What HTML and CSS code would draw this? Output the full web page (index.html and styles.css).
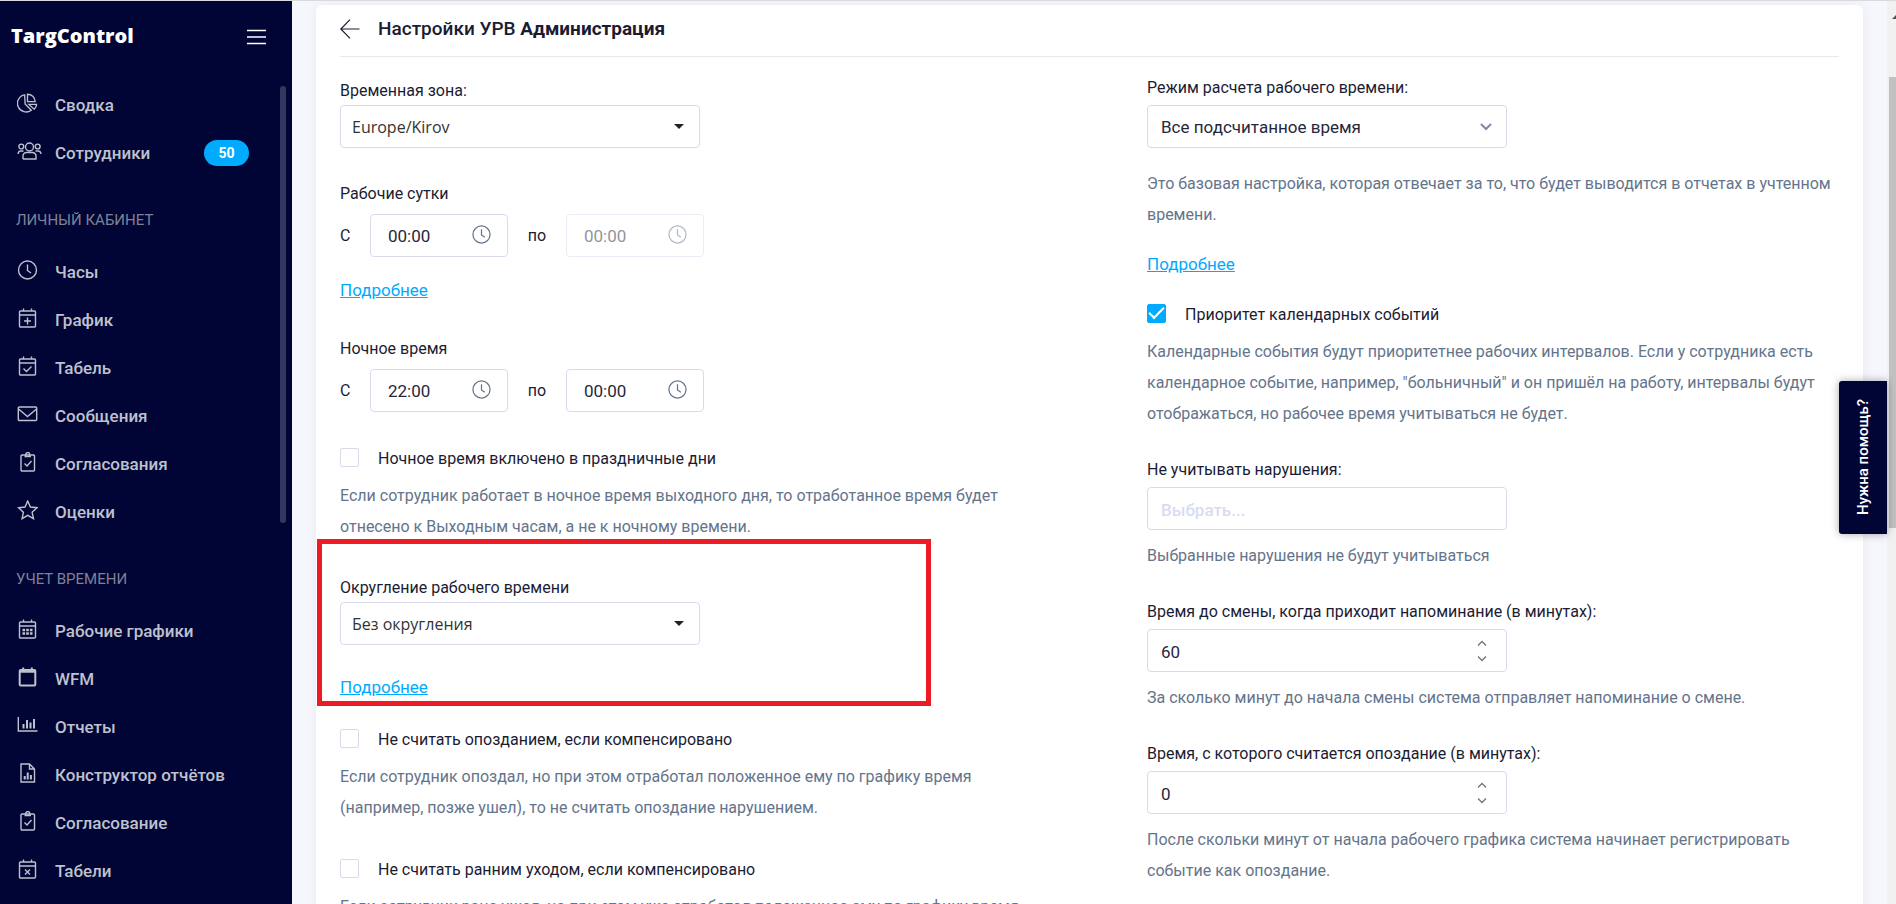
FILE: index.html
```
<!DOCTYPE html>
<html lang="ru">
<head>
    <meta charset="UTF-8">
    <meta name="viewport" content="width=device-width, initial-scale=1.0">
    <title>Настройки УРВ</title>
    <link rel="stylesheet" href="styles.css">
</head>
<body>
    <!-- shared icons -->
    <svg class="sprite" aria-hidden="true">
        <symbol id="i-clock" viewBox="0 0 20 20">
            <circle cx="10" cy="10" r="9"/>
            <path d="M10 4.5V10.5L13.5 13"/>
        </symbol>
        <symbol id="i-calendar" viewBox="0 0 20 20">
            <rect x="2" y="3" width="16" height="16" rx="1"/>
            <path d="M2 7H18M6 0.5V3M14 0.5V3"/>
        </symbol>
        <symbol id="i-clipboard" viewBox="0 0 20 20">
            <rect x="3.5" y="3" width="13.5" height="16" rx="1"/>
            <path d="M7 4.5H13.5M8.2 4V2.6A2 2 0 0 1 12.2 2.6V4M7 11.5L9.5 14L14 9"/>
        </symbol>
        <symbol id="i-spin" viewBox="0 0 10 20">
            <path d="M1 5L5 1L9 5M1 16L5 20L9 16"/>
        </symbol>
    </svg>

    <div class="app">
        <aside class="sidebar">
            <div class="brand">
                <a href="#" class="logo">TargControl</a>
                <button type="button" class="menu-btn" aria-label="Меню">
                    <svg width="20" height="16" viewBox="0 0 20 16"><path d="M0 1.5H19M0 8H19M0 14.5H19"/></svg>
                </button>
            </div>
            <nav class="menu">
                <a href="#" class="menu-item">
                    <svg class="icon" viewBox="0 0 22 20"><path d="M8 1.5A9 9 0 1 0 15 17.5L8.5 11Z"/><path d="M11 0.8V8.5H19A8 8 0 0 0 11 0.8Z"/><path d="M12.5 11.5H20.5A8 8 0 0 1 18 16.5Z"/></svg>
                    Сводка
                </a>
                <a href="#" class="menu-item">
                    <svg class="icon icon-wide" viewBox="0 0 24 20"><circle cx="12" cy="6" r="4"/><circle cx="3.8" cy="5.5" r="2.4"/><circle cx="20.2" cy="5.5" r="2.4"/><path d="M5.5 18V15A3.5 3.5 0 0 1 9 11.5H15A3.5 3.5 0 0 1 18.5 15V18H5.5M0.7 13V12A2.5 2.5 0 0 1 3 10H6M23.3 13V12A2.5 2.5 0 0 0 21 10H18"/></svg>
                    Сотрудники
                    <span class="badge">50</span>
                </a>

                <h2 class="menu-title">Личный кабинет</h2>
                <a href="#" class="menu-item">
                    <svg class="icon" viewBox="0 0 20 20"><use href="#i-clock"/></svg>
                    Часы
                </a>
                <a href="#" class="menu-item">
                    <svg class="icon" viewBox="0 0 20 20"><use href="#i-calendar"/><path d="M10 9.5V16.5M6.5 13H13.5"/></svg>
                    График
                </a>
                <a href="#" class="menu-item">
                    <svg class="icon" viewBox="0 0 20 20"><use href="#i-calendar"/><path d="M6 12.5L9 15.5L14 10.5"/></svg>
                    Табель
                </a>
                <a href="#" class="menu-item">
                    <svg class="icon" viewBox="0 0 20 20"><rect x="0.8" y="3" width="18.4" height="13.5" rx="1"/><path d="M1 5L10 12.5L19 5"/></svg>
                    Сообщения
                </a>
                <a href="#" class="menu-item">
                    <svg class="icon" viewBox="0 0 20 20"><use href="#i-clipboard"/></svg>
                    Согласования
                </a>
                <a href="#" class="menu-item">
                    <svg class="icon" viewBox="0 0 20 20"><path d="M10.2 1L12.9 7L19.5 7.7L14.6 12.2L16 18.7L10.2 15.4L4.6 18.7L5.9 12.2L1 7.7L7.5 7Z"/></svg>
                    Оценки
                </a>

                <h2 class="menu-title">Учет времени</h2>
                <a href="#" class="menu-item">
                    <svg class="icon" viewBox="0 0 20 20"><use href="#i-calendar"/><path class="dots" d="M5 11H15M5 14.5H15"/></svg>
                    Рабочие графики
                </a>
                <a href="#" class="menu-item">
                    <svg class="icon" viewBox="0 0 20 20"><rect class="bold" x="2.2" y="3" width="15.6" height="15.6" rx="1"/><path class="bold" d="M2 4.8H18M5.7 0.5V4M14.3 0.5V4"/></svg>
                    WFM
                </a>
                <a href="#" class="menu-item">
                    <svg class="icon" viewBox="0 0 20 20"><path d="M0.8 2V16H20"/><path class="bold" d="M6 9V13.5M9.5 5V13.5M13 7.5V13.5M16.5 4V13.5"/></svg>
                    Отчеты
                </a>
                <a href="#" class="menu-item">
                    <svg class="icon" viewBox="0 0 20 20"><path d="M3.5 1H12L17 6V19H3.5ZM12 1V6H17"/><path class="bold" d="M7.2 13V16.5M10.2 9.5V16.5M13.4 12V16.5"/></svg>
                    Конструктор отчётов
                </a>
                <a href="#" class="menu-item">
                    <svg class="icon" viewBox="0 0 20 20"><use href="#i-clipboard"/></svg>
                    Согласование
                </a>
                <a href="#" class="menu-item">
                    <svg class="icon" viewBox="0 0 20 20"><use href="#i-calendar"/><path d="M7.5 10.5L12.5 15.5M12.5 10.5L7.5 15.5"/></svg>
                    Табели
                </a>
            </nav>
            <div class="menu-thumb"></div>
        </aside>

        <main class="content">
            <form class="card">
                <header class="card-header">
                    <a href="#" class="back" aria-label="Назад">
                        <svg width="20" height="20" viewBox="0 0 20 20"><path d="M10 0.7L0.8 10L10 19.3M0.8 10H19.5"/></svg>
                    </a>
                    <h1>Настройки УРВ <b>Администрация</b></h1>
                </header>

                <div class="columns">
                    <div class="col">
                        <div class="field">
                            <label for="timezone" class="label-tight">Временная зона:</label>
                            <div class="control">
                                <select id="timezone" class="input combo">
                                    <option>Europe/Kirov</option>
                                </select>
                                <svg class="caret" width="10" height="5" viewBox="0 0 10 5"><path d="M0 0H10L5 5Z"/></svg>
                            </div>
                        </div>

                        <fieldset class="field field-day">
                            <legend>Рабочие сутки</legend>
                            <div class="range">
                                <label for="dayFrom">С</label>
                                <div class="time">
                                    <input type="text" id="dayFrom" class="input" value="00:00">
                                    <svg class="clock"><use href="#i-clock"/></svg>
                                </div>
                                <label for="dayTo">по</label>
                                <div class="time time-disabled">
                                    <input type="text" id="dayTo" class="input" value="00:00" disabled>
                                    <svg class="clock"><use href="#i-clock"/></svg>
                                </div>
                            </div>
                        </fieldset>
                        <a href="#" class="more more-day">Подробнее</a>

                        <fieldset class="field">
                            <legend>Ночное время</legend>
                            <div class="range">
                                <label for="nightFrom">С</label>
                                <div class="time">
                                    <input type="text" id="nightFrom" class="input" value="22:00">
                                    <svg class="clock"><use href="#i-clock"/></svg>
                                </div>
                                <label for="nightTo">по</label>
                                <div class="time">
                                    <input type="text" id="nightTo" class="input" value="00:00">
                                    <svg class="clock"><use href="#i-clock"/></svg>
                                </div>
                            </div>
                        </fieldset>

                        <div class="field">
                            <div class="check">
                                <input type="checkbox" id="holidays">
                                <label for="holidays">Ночное время включено в праздничные дни</label>
                            </div>
                            <p class="hint">Если сотрудник работает в ночное время выходного дня, то отработанное время будет отнесено к Выходным часам, а не к ночному времени.</p>
                        </div>

                        <div class="rounding">
                            <div class="field">
                                <label for="rounding" class="label-tight">Округление рабочего времени</label>
                                <div class="control">
                                    <select id="rounding" class="input combo">
                                        <option>Без округления</option>
                                    </select>
                                    <svg class="caret" width="10" height="5" viewBox="0 0 10 5"><path d="M0 0H10L5 5Z"/></svg>
                                </div>
                            </div>
                            <a href="#" class="more">Подробнее</a>
                        </div>

                        <div class="field">
                            <div class="check">
                                <input type="checkbox" id="late">
                                <label for="late">Не считать опозданием, если компенсировано</label>
                            </div>
                            <p class="hint">Если сотрудник опоздал, но при этом отработал положенное ему по графику время (например, позже ушел), то не считать опоздание нарушением.</p>
                        </div>

                        <div class="field">
                            <div class="check">
                                <input type="checkbox" id="early">
                                <label for="early">Не считать ранним уходом, если компенсировано</label>
                            </div>
                            <p class="hint">Если сотрудник рано ушел, но при этом уже отработал положенное ему по графику время</p>
                        </div>
                    </div>

                    <div class="col col-right">
                        <div class="mode">
                            <label for="mode">Режим расчета рабочего времени:</label>
                            <div class="control">
                                <select id="mode" class="input">
                                    <option>Все подсчитанное время</option>
                                </select>
                                <svg class="chevron" width="12" height="8" viewBox="0 0 12 8"><path d="M1 1L6 6L11 1"/></svg>
                            </div>
                            <p class="hint">Это базовая настройка, которая отвечает за то, что будет выводится в отчетах в учтенном времени.</p>
                        </div>
                        <a href="#" class="more">Подробнее</a>

                        <div class="field">
                            <div class="check">
                                <input type="checkbox" id="priority" checked>
                                <label for="priority">Приоритет календарных событий</label>
                            </div>
                            <p class="hint">Календарные события будут приоритетнее рабочих интервалов. Если у сотрудника есть календарное событие, например, "больничный" и он пришёл на работу, интервалы будут отображаться, но рабочее время учитываться не будет.</p>
                        </div>

                        <div class="field">
                            <label for="violations">Не учитывать нарушения:</label>
                            <div class="control">
                                <input type="text" id="violations" class="input input-low" placeholder="Выбрать...">
                            </div>
                            <p class="hint">Выбранные нарушения не будут учитываться</p>
                        </div>

                        <div class="field">
                            <label for="reminder">Время до смены, когда приходит напоминание (в минутах):</label>
                            <div class="control">
                                <input type="number" id="reminder" class="input input-low" value="60">
                                <svg class="spin"><use href="#i-spin"/></svg>
                            </div>
                            <p class="hint">За сколько минут до начала смены система отправляет напоминание о смене.</p>
                        </div>

                        <div class="field">
                            <label for="lateFrom">Время, с которого считается опоздание (в минутах):</label>
                            <div class="control">
                                <input type="number" id="lateFrom" class="input input-low" value="0">
                                <svg class="spin"><use href="#i-spin"/></svg>
                            </div>
                            <p class="hint">После скольки минут от начала рабочего графика система начинает регистрировать событие как опоздание.</p>
                        </div>
                    </div>
                </div>
            </form>
        </main>

        <div class="scrollbar">
            <svg class="scroll-up" width="7" height="4" viewBox="0 0 7 4"><path d="M3 4L7 0V4Z"/></svg>
            <div class="scroll-thumb"></div>
        </div>
        <button type="button" class="help">Нужна помощь?</button>
    </div>
</body>
</html>
```
FILE: styles.css
```
* {
    box-sizing: border-box;
}

body {
    margin: 0;
    font-family: Roboto, "Liberation Sans", sans-serif;
    font-size: 16px;
    line-height: 24px;
    color: #1b1c33;
    background-color: #f6f7fc;
}

svg {
    fill: none;
    stroke: currentColor;
}

.sprite {
    display: none;
}

.app {
    position: relative;
    display: flex;
    height: 100vh;
    overflow: hidden;
    border-top: 1px solid #d9dade;
}

/* Sidebar */
.sidebar {
    position: relative;
    flex: 0 0 292px;
    background-color: #000536;
    color: #bfc1cd;
}

.brand {
    display: flex;
    align-items: center;
    justify-content: space-between;
    height: 71px;
    padding: 0 25px 0 11px;
    margin-bottom: 8px;
}

.logo {
    padding-bottom: 2px;
    font-family: "Open Sans", sans-serif;
    font-size: 20px;
    font-weight: 800;
    color: #fff;
    text-decoration: none;
}

.menu-btn {
    display: flex;
    padding: 0;
    border: none;
    background: none;
    color: #fff;
    cursor: pointer;
}

.menu-btn svg {
    stroke-width: 1.5;
}

.menu-item {
    display: flex;
    align-items: center;
    height: 48px;
    padding: 1px 43px 0 17px;
    color: inherit;
    font-size: 17px;
    font-weight: 500;
    text-decoration: none;
}

.icon {
    flex: none;
    width: 21px;
    height: 20px;
    margin: 0 17px 3px 0;
    stroke-width: 1.4;
}

.icon-wide {
    width: 25px;
    margin-right: 13px;
}

.icon .bold {
    stroke-width: 2;
}

.icon .dots {
    stroke-width: 2.4;
    stroke-dasharray: 2.6 1.1;
}

.badge {
    width: 45px;
    margin-left: auto;
    border-radius: 13px;
    background-color: #00aaff;
    color: #fff;
    font-size: 14px;
    font-weight: 700;
    line-height: 26px;
    text-align: center;
}

.menu-title {
    margin: 0;
    padding: 32px 16px 15px;
    font-size: 15px;
    font-weight: 400;
    text-transform: uppercase;
    color: #7f8295;
}

.menu-thumb {
    position: absolute;
    top: 85px;
    right: 6px;
    width: 6px;
    height: 437px;
    border-radius: 3px;
    background-color: #33375f;
}

/* Settings card */
.content {
    flex: 1;
    min-width: 0;
    padding: 4px 24px 0;
}

.card {
    padding: 0 24px 24px;
    border-radius: 6px;
    background-color: #fff;
    box-shadow: 0 0 14px rgba(30, 20, 60, 0.06);
}

.card-header {
    display: flex;
    align-items: center;
    gap: 18px;
    height: 52px;
    padding-bottom: 3px;
    border-bottom: 1px solid #e9e9ed;
}

.card-header h1 {
    margin: 0;
    font-size: 19px;
    font-weight: 500;
}

.card-header b {
    font-weight: 700;
}

.back {
    display: flex;
    color: #1b1c33;
}

.back svg {
    stroke-width: 1.2;
}

.columns {
    display: grid;
    grid-template-columns: 1fr 1fr;
    gap: 115px;
}

.col {
    padding-top: 22px;
}

.col-right {
    padding-top: 19px;
}

.field {
    margin: 0 0 34px;
    padding: 0;
    border: none;
}

.col-right .field {
    margin-bottom: 29px;
}

.field-day {
    margin-bottom: 21px;
}

.field label,
.mode label {
    display: block;
    margin-bottom: 5px;
}

.field .label-tight {
    margin-bottom: 2px;
}

legend {
    padding: 0;
    margin-bottom: 8px;
}

.control {
    position: relative;
    width: 360px;
}

.input {
    display: block;
    width: 100%;
    height: 43px;
    padding: 0 13px;
    border: 1px solid #d9dbec;
    border-radius: 4px;
    background-color: #fff;
    color: #26273a;
    font: inherit;
    font-size: 17px;
    appearance: none;
}

.input-low {
    padding-top: 2px;
}

.input::placeholder {
    color: #d9dcf0;
    font-weight: 500;
}

.input[type="number"] {
    appearance: textfield;
}

.combo {
    padding: 0 11px;
    color: #333;
    font-family: "Open Sans", sans-serif;
    font-size: 16px;
}

.caret,
.chevron,
.spin,
.clock {
    position: absolute;
    pointer-events: none;
}

.caret {
    top: 19px;
    right: 16px;
    fill: #222;
    stroke: none;
}

.chevron {
    top: 18px;
    right: 15px;
    color: #7d8aa3;
    stroke-width: 2;
}

.spin {
    top: 10px;
    right: 20px;
    width: 10px;
    height: 23px;
    overflow: visible;
    color: #6c757d;
    stroke-width: 1.3;
}

.range {
    display: grid;
    grid-template-columns: 30px 138px 58px 138px;
    align-items: center;
}

.range label {
    margin: 0;
}

.range .time + label {
    text-align: center;
}

.time {
    position: relative;
}

.time .input {
    padding: 0 17px;
}

.clock {
    top: 11px;
    right: 17px;
    width: 19px;
    height: 19px;
    color: #64748b;
    stroke-width: 1.3;
}

.time-disabled {
    opacity: 0.5;
}

.more {
    display: block;
    width: max-content;
    margin-bottom: 26px;
    color: #00aaff;
    font-size: 17px;
    text-decoration: underline;
}

.more-day {
    margin-bottom: 35px;
}

.check {
    display: flex;
    align-items: center;
    gap: 19px;
    height: 24px;
}

.check label {
    margin: 0;
    padding-top: 2px;
}

.check input {
    flex: none;
    width: 19px;
    height: 19px;
    margin: 0 0 2px;
    border: 1px solid #d9dbec;
    border-radius: 2px;
    background-color: #fff;
    appearance: none;
}

.check input:checked {
    display: grid;
    place-items: center;
    border-color: #00aaff;
    background-color: #00aaff;
}

.check input:checked::before {
    content: "";
    width: 13px;
    height: 6px;
    margin-bottom: 4px;
    border: solid #fff;
    border-width: 0 0 2px 2px;
    transform: rotate(-45deg);
}

.hint {
    margin: 10px 0 0;
    line-height: 31px;
    color: #64748b;
}

.mode .hint {
    margin: 20px 0 22px;
}

/* Highlighted setting */
.rounding {
    position: relative;
}

.rounding .field {
    margin-bottom: 30px;
}

.rounding .more {
    margin-bottom: 28px;
}

.rounding::before {
    content: "";
    position: absolute;
    top: -37px;
    right: 101px;
    bottom: -7px;
    left: -23px;
    border: 5px solid #ed1c24;
    pointer-events: none;
}

/* Page scrollbar and help tab */
.scrollbar {
    flex: 0 0 9px;
    padding: 14px 0 0 2px;
    background-color: #f1f1f1;
}

.scroll-up {
    display: block;
    margin-bottom: 58px;
    fill: #505050;
    stroke: none;
}

.scroll-thumb {
    height: 451px;
    background-color: #c1c1c1;
}

.help {
    position: absolute;
    top: 380px;
    right: 9px;
    width: 48px;
    height: 153px;
    padding: 0;
    border: none;
    border-radius: 0 3px 3px 0;
    background-color: #000536;
    box-shadow: 0 0 8px rgba(0, 0, 0, 0.35);
    color: #fff;
    font: 500 15px/24px Roboto, sans-serif;
    writing-mode: vertical-rl;
    transform: rotate(180deg);
    cursor: pointer;
}
```
